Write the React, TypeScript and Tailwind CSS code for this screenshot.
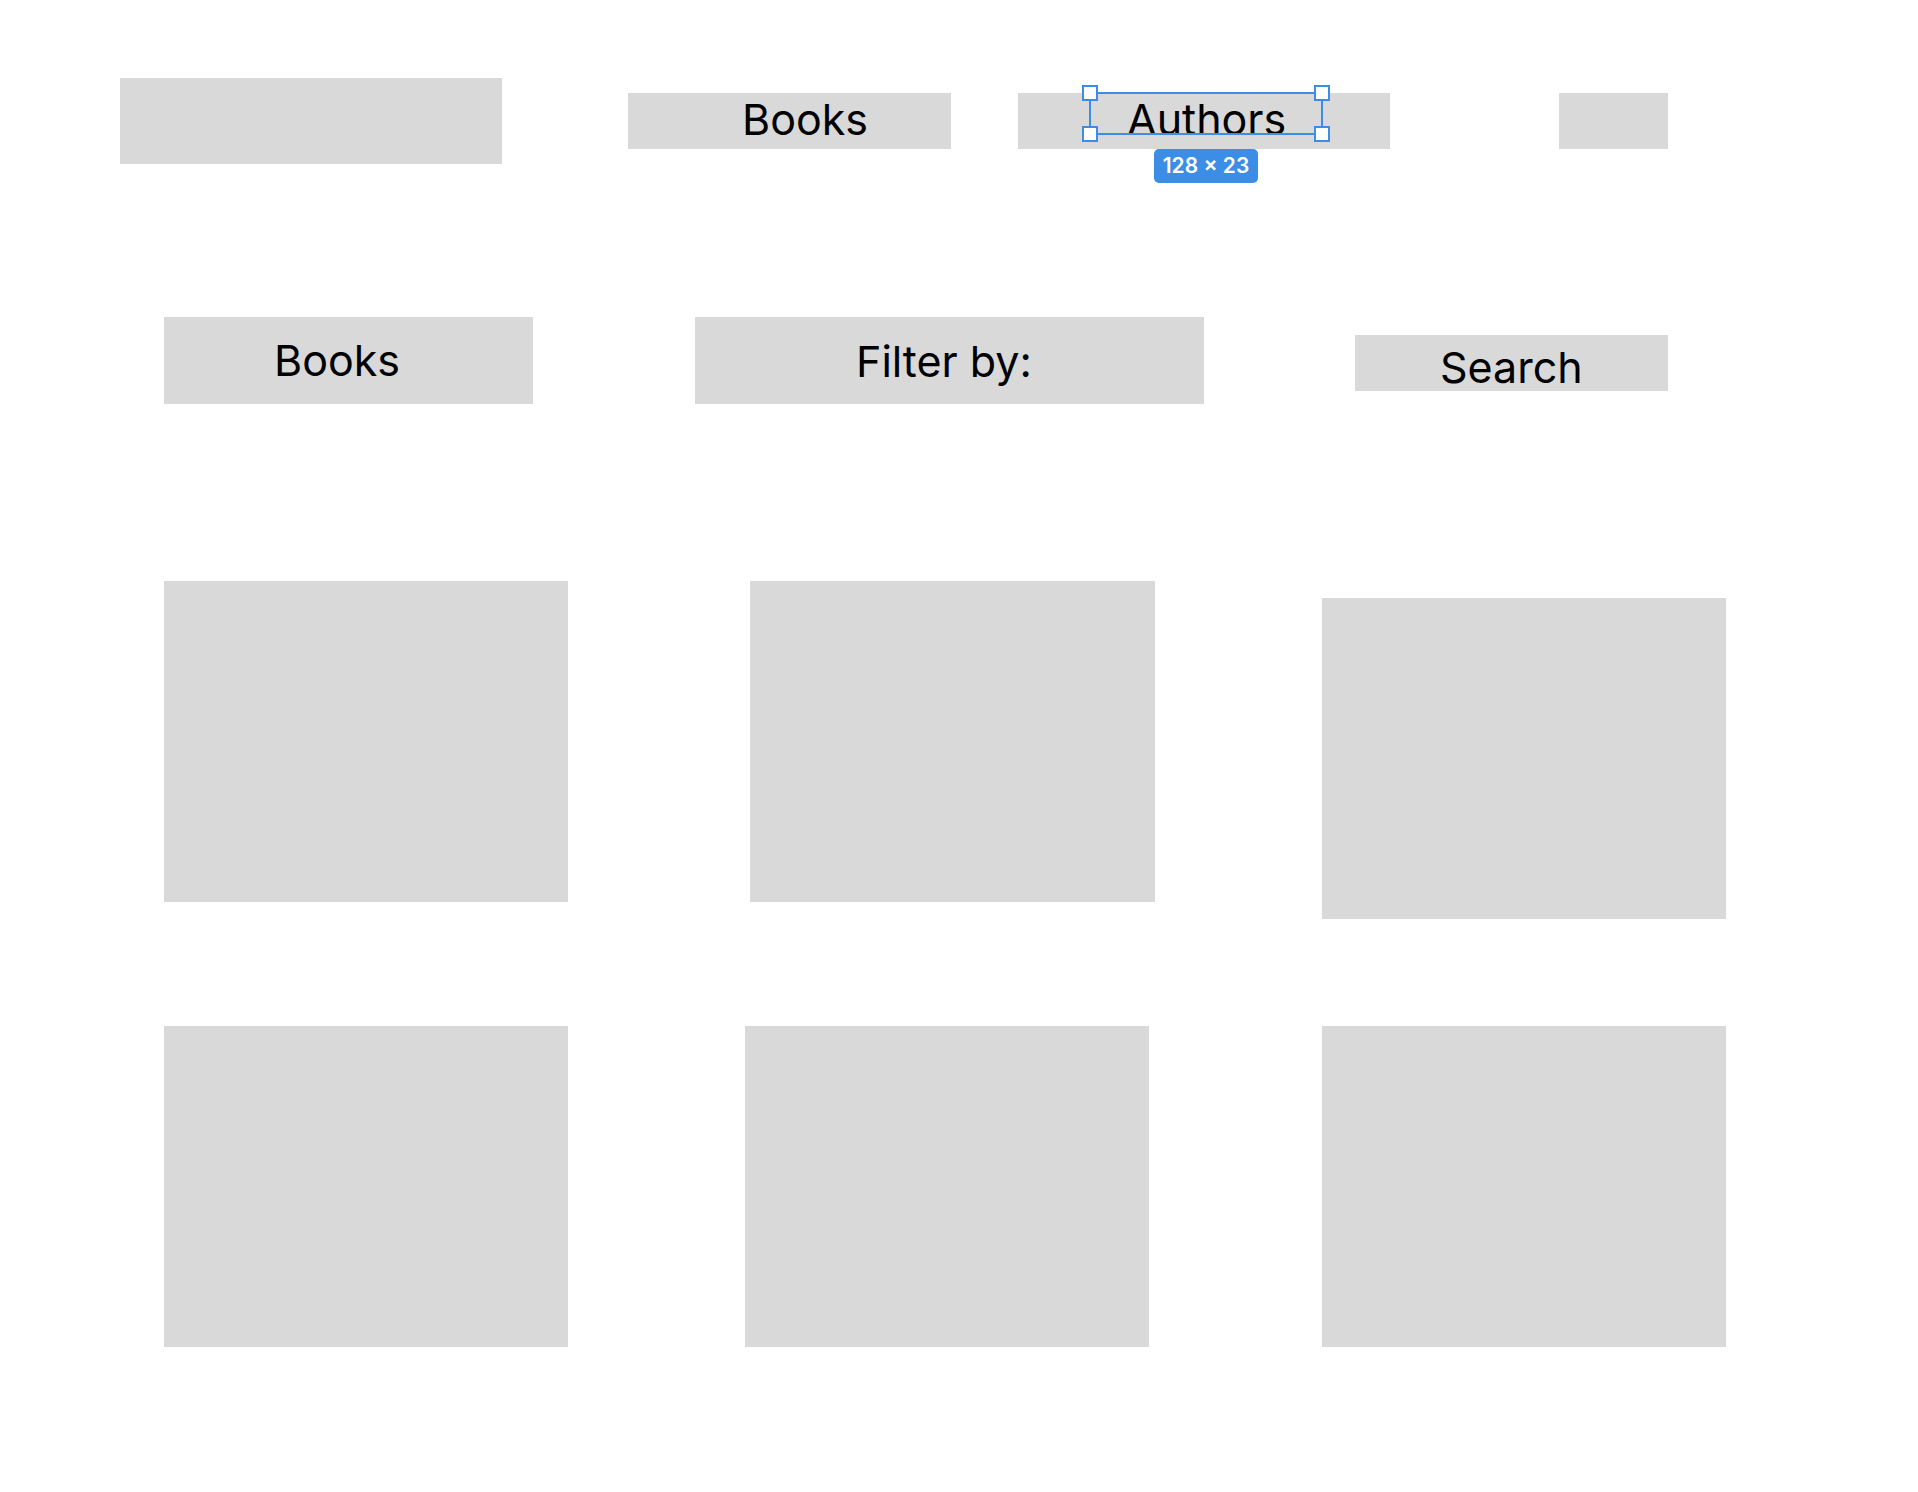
const box = "bg-[#d9d9d9]";

function Handle({ className }: { className: string }) {
  return (
    <span
      className={`absolute w-[16px] h-[16px] bg-white border-2 border-[#3b8de5] ${className}`}
    />
  );
}

function Card({ className = "" }: { className?: string }) {
  return <div className={`${box} w-[404px] h-[321px] shrink-0 ${className}`} />;
}

export default function App() {
  return (
    <div className="w-[1918px] h-[1492px] bg-white font-['Inter',sans-serif] text-black overflow-hidden">
      {/* Header */}
      <header className="flex items-start pl-[120px] pt-[78px]">
        {/* Logo placeholder */}
        <div className={`${box} w-[382px] h-[86px] shrink-0`} />

        <nav className="flex items-start mt-[15px] ml-[126px]">
          <a className={`${box} w-[323px] h-[56px] pl-[114px] text-[43px] leading-[1.21] shrink-0`}>
            Books
          </a>
          <div className={`${box} relative w-[372px] h-[56px] ml-[67px] pl-[109px] text-[43px] leading-[1.21] shrink-0`}>
            Authors
            {/* Selection overlay */}
            <div className="absolute left-[71px] top-[-1px] w-[234px] h-[43px] border-2 border-[#3b8de5]">
              <Handle className="-left-[9px] -top-[9px]" />
              <Handle className="-right-[9px] -top-[9px]" />
              <Handle className="-left-[9px] -bottom-[9px]" />
              <Handle className="-right-[9px] -bottom-[9px]" />
            </div>
            <div className="absolute left-[136px] top-[56px] w-[104px] h-[34px] rounded-[5px] bg-[#3b8de5] text-white text-[21px] font-semibold leading-[34px] text-center">
              128 × 23
            </div>
          </div>
          <div className={`${box} w-[109px] h-[56px] ml-[169px] shrink-0`} />
        </nav>
      </header>

      {/* Toolbar */}
      <section className="flex items-start pl-[164px] mt-[153px]">
        <h1 className={`${box} w-[369px] h-[87px] pl-[110px] pt-[17px] text-[43px] font-normal leading-[1.21] shrink-0`}>
          Books
        </h1>
        <div className={`${box} w-[509px] h-[87px] ml-[162px] pl-[161px] pt-[18px] text-[43px] leading-[1.21] shrink-0`}>
          Filter by:
        </div>
        <div className={`${box} w-[313px] h-[56px] ml-[151px] mt-[18px] pl-[85px] pt-[6px] text-[43px] leading-[1.21] shrink-0`}>
          Search
        </div>
      </section>

      {/* Book grid */}
      <section className="pl-[164px] mt-[177px]">
        <div className="flex items-start">
          <Card />
          <Card className="ml-[182px] w-[405px]" />
          <Card className="ml-[167px] mt-[17px]" />
        </div>
        <div className="flex items-start mt-[107px]">
          <Card />
          <Card className="ml-[177px]" />
          <Card className="ml-[173px]" />
        </div>
      </section>
    </div>
  );
}
